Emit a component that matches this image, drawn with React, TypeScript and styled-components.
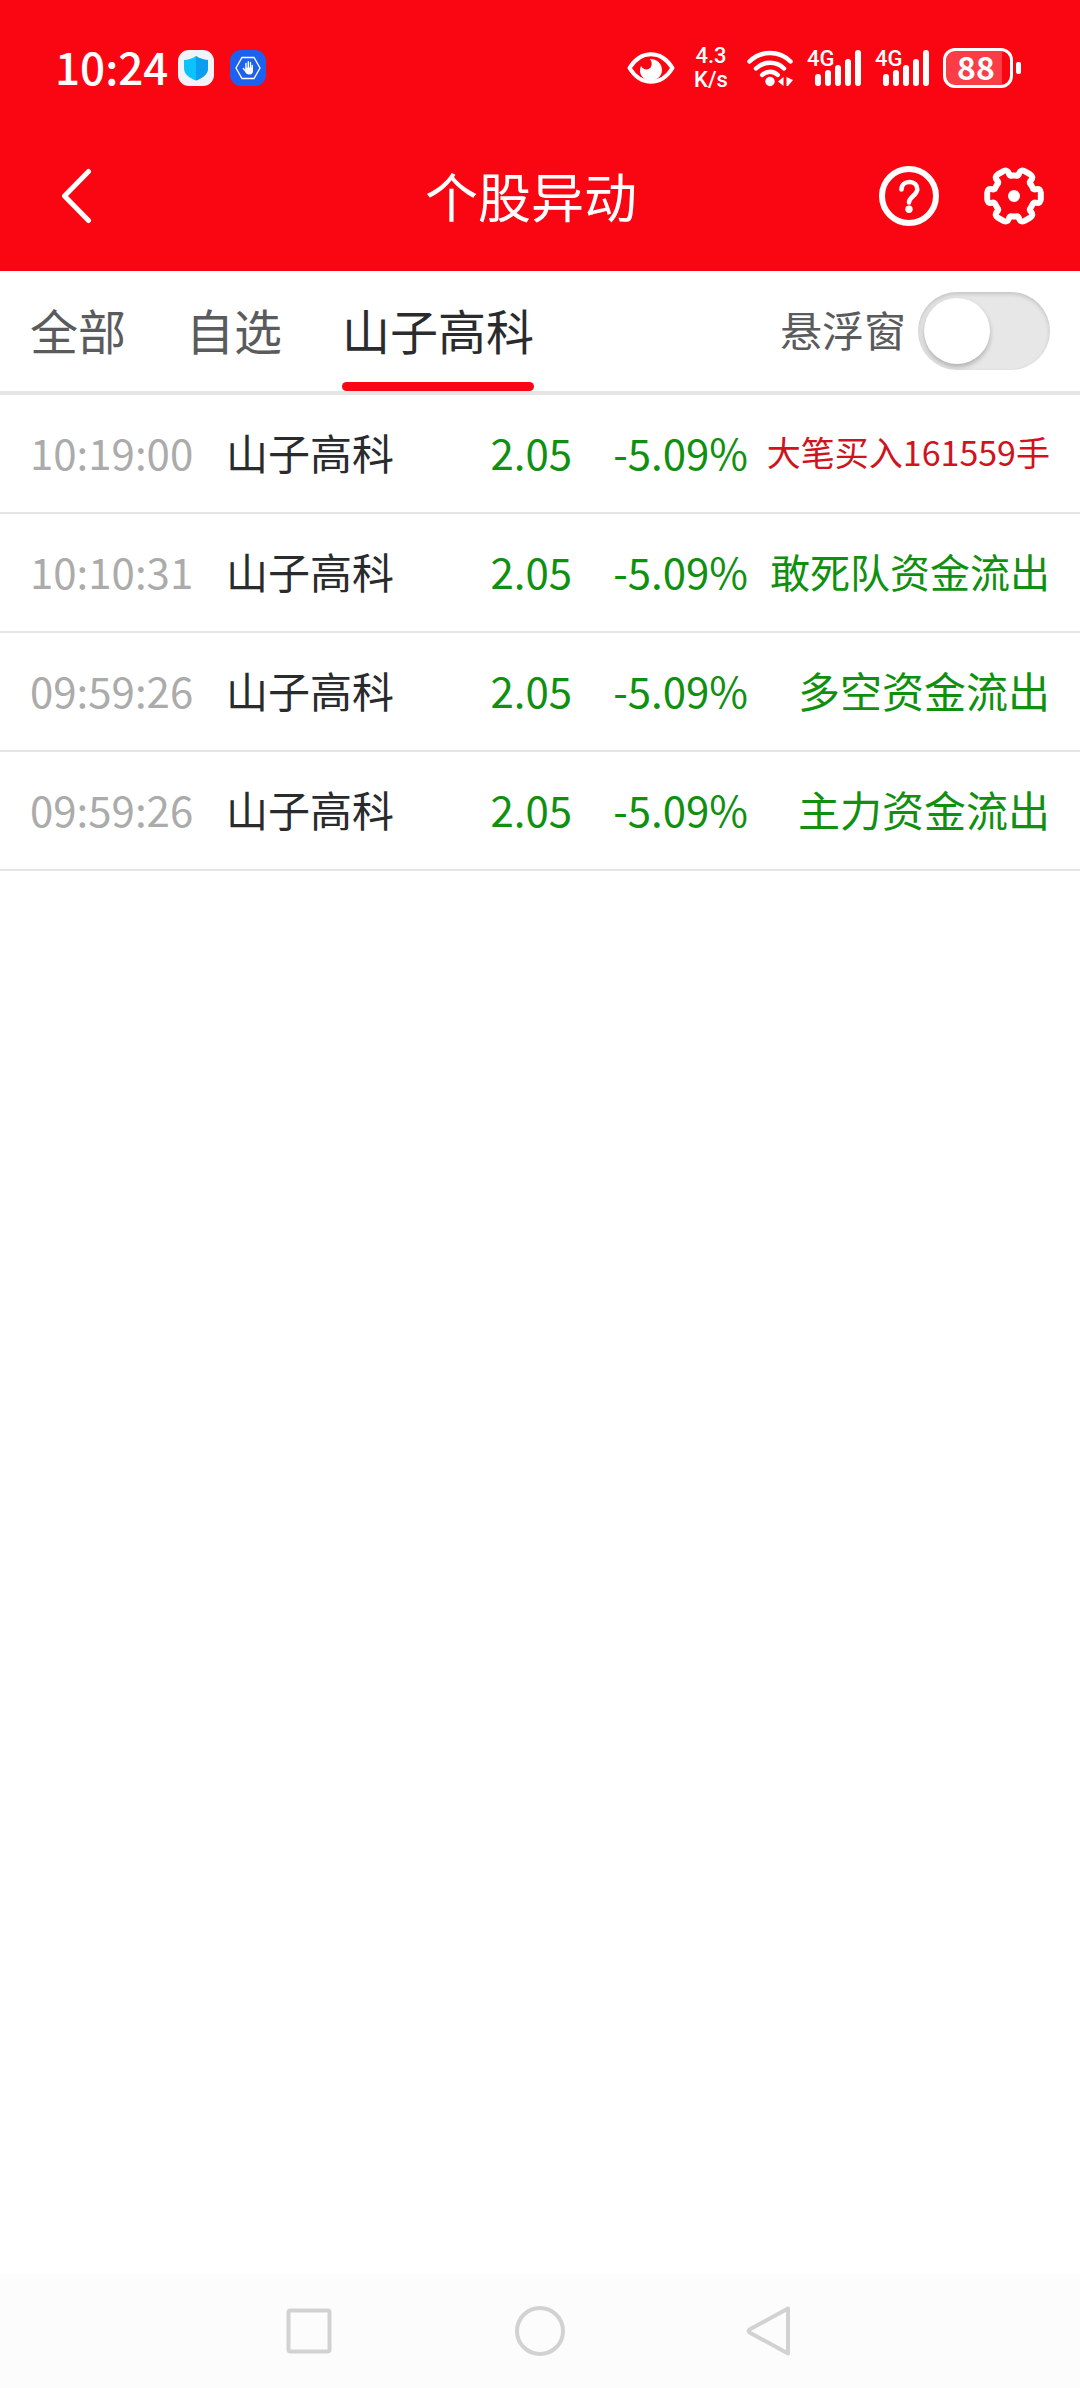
import React, { useState } from "react";
import styled, { createGlobalStyle } from "styled-components";

const color = {
  brand: "#f90612",
  ink: "#2a2b2d",
  tab: "#5a5b5c",
  muted: "#ababab",
  line: "#e5e5e6",
  up: "#d0131c",
  down: "#109010",
  nav: "#d2d2d2",
};

const GlobalStyle = createGlobalStyle`
  *, *::before, *::after { box-sizing: border-box; }
  body {
    margin: 0;
    background: #fff;
    color: ${color.ink};
    font-family: "Noto Sans CJK SC", "Noto Sans", sans-serif;
  }
  button {
    margin: 0;
    padding: 0;
    border: 0;
    background: none;
    color: inherit;
    font: inherit;
    cursor: pointer;
  }
  svg { display: block; }
`;

const Page = styled.div`
  min-height: 100vh;
  display: flex;
  flex-direction: column;
`;

const TopArea = styled.header`
  background: ${color.brand};
  color: #fff;
`;

const StatusBar = styled.div`
  display: flex;
  align-items: center;
  justify-content: space-between;
  height: 121px;
  padding: 15px 59px 0 55px;
`;

const StatusGroup = styled.div<{ $gap: number }>`
  display: flex;
  align-items: center;
  gap: ${(p) => p.$gap}px;
`;

const Clock = styled.time`
  width: 107px;
  padding-bottom: 4px;
  font-size: 44px;
  line-height: 48px;
  font-weight: 500;
`;

const Speed = styled.div`
  width: 36px;
  font-family: Roboto, "Noto Sans CJK SC", sans-serif;
  font-size: 22px;
  line-height: 24px;
  font-weight: 500;
  text-align: center;
  white-space: nowrap;
`;

const SignalBox = styled.div`
  display: grid;
  width: 54px;
  height: 36px;

  > * {
    grid-area: 1 / 1;
  }
`;

const SignalLabel = styled.span`
  font-family: Roboto, "Noto Sans CJK SC", sans-serif;
  font-size: 22px;
  line-height: 18px;
  font-weight: 500;
`;

const Battery = styled.div`
  display: flex;
  align-items: center;
  gap: 3px;
`;

const BatteryBody = styled.div`
  width: 70px;
  height: 40px;
  padding-right: 4px;
  border: 3px solid #fff;
  border-radius: 12px;
  background: linear-gradient(to right, rgba(255, 255, 255, 0.22) 88%, transparent 88%);
  font-size: 32px;
  line-height: 30px;
  font-weight: 700;
  text-align: center;
`;

const BatteryTip = styled.div`
  width: 5px;
  height: 12px;
  border-radius: 2px;
  background: #fff;
`;

const TitleBar = styled.div`
  display: grid;
  grid-template-columns: 201px 1fr 219px;
  align-items: center;
  height: 150px;
`;

const BackButton = styled.button`
  display: flex;
  align-items: center;
  height: 100%;
  padding-left: 60px;
`;

const Title = styled.h1`
  margin: 0;
  padding-bottom: 2px;
  font-size: 53px;
  line-height: 64px;
  font-weight: 400;
  text-align: center;
`;

const Actions = styled.div`
  display: flex;
  justify-content: flex-end;
  gap: 45px;
  padding-right: 36px;
`;

const TabBar = styled.div`
  display: flex;
  justify-content: space-between;
  height: 124px;
  padding: 0 30px;
  border-bottom: 4px solid ${color.line};
`;

const Tabs = styled.div`
  display: flex;
  gap: 60px;
`;

const Tab = styled.button<{ $active: boolean }>`
  position: relative;
  padding-bottom: 4px;
  color: ${(p) => (p.$active ? color.ink : color.tab)};
  font-size: 48px;
  line-height: 72px;

  &::after {
    content: "";
    position: absolute;
    left: 0;
    right: 0;
    bottom: 0;
    height: 9px;
    border-radius: 5px;
    background: ${(p) => (p.$active ? color.brand : "transparent")};
  }
`;

const FloatSwitch = styled.label`
  display: flex;
  align-items: center;
  gap: 12px;
  color: ${color.tab};
  font-size: 42px;
  line-height: 60px;
`;

const SwitchText = styled.span`
  padding-bottom: 4px;
`;

const Switch = styled.input`
  appearance: none;
  display: flex;
  width: 132px;
  height: 78px;
  margin: 0;
  padding: 6px;
  border-radius: 39px;
  background: #e7e7e7;
  box-shadow: inset 0 2px 4px rgba(0, 0, 0, 0.16);
  cursor: pointer;

  &::before {
    content: "";
    width: 66px;
    height: 66px;
    border-radius: 50%;
    background: #fff;
    box-shadow: 0 3px 5px rgba(0, 0, 0, 0.24);
  }

  &:checked {
    justify-content: flex-end;
    background: ${color.brand};
  }
`;

const EventTable = styled.table`
  width: 100%;
  table-layout: fixed;
  border-collapse: separate;
  border-spacing: 0;
`;

const Col = styled.col<{ $width?: number }>`
  width: ${(p) => (p.$width ? `${p.$width}px` : "auto")};
`;

const Cell = styled.td<{ $tone?: string; $align?: string; $size?: number }>`
  height: 119px;
  padding: 0 0 4px;
  border-bottom: 2px solid ${color.line};
  color: ${(p) => p.$tone ?? color.ink};
  font-size: ${(p) => p.$size ?? 42}px;
  line-height: 60px;
  text-align: ${(p) => p.$align ?? "left"};
  white-space: nowrap;

  &:first-child {
    padding-left: 30px;
  }

  &:last-child {
    padding-right: 30px;
  }
`;

const NavBar = styled.nav`
  display: flex;
  justify-content: center;
  height: 114px;
  margin-top: auto;
  background: #fcfcfc;
`;

const NavButton = styled.button`
  display: flex;
  align-items: center;
  justify-content: center;
  width: 231px;
`;

const ShieldIcon = () => (
  <svg width="36" height="36" viewBox="0 0 36 36" aria-hidden="true">
    <rect width="36" height="36" rx="11" fill="#f1f3f7" />
    <path d="M18 6c3.500 2.500 7.500 3.800 12 4v8c0 6-5 10-12 12.500C11 28 6 24 6 18v-8c4.500-.2 8.500-1.500 12-4z" fill="#0bc3fb" />
    <path d="M18 6c3.500 2.500 7.500 3.800 12 4v8c0 6-5 10-12 12.500z" fill="#0c9cf0" />
  </svg>
);

const HandIcon = () => (
  <svg width="36" height="36" viewBox="0 0 36 36" aria-hidden="true">
    <rect width="36" height="36" rx="11" fill="#1c62ef" />
    <path d="M12 7.500h12l6 10.500-6 10.500H12L6 18z" fill="none" stroke="#fff" strokeWidth="1.300" />
    <path
      d="M16 19v-5.500M18.300 18v-6.300M20.500 18v-5.500M22.300 20v-4.500M13.300 18.500l3 3.500"
      stroke="#fff"
      strokeWidth="1.400"
      strokeLinecap="round"
    />
    <path d="M15.300 17.500H23V21c0 2-1.300 3.500-3.300 3.500h-1c-1.300 0-2.200-.6-3-1.700z" fill="#fff" />
  </svg>
);

const EyeIcon = () => (
  <svg width="48" height="34" viewBox="0 0 48 34" aria-hidden="true">
    <path
      d="M2.500 17C8 8 15 3.200 24 3.200S40 8 45.500 17C40 26 33 30.800 24 30.800S8 26 2.500 17z"
      fill="none"
      stroke="#fff"
      strokeWidth="4"
      strokeLinejoin="round"
    />
    <path d="M23 8c7 0 12 4.500 12 11 0 6-5 10.500-11 10.500S13 25.500 13 19.500c0-1.700.3-3 1-4.500 1.500 2.500 3.500 3.800 6 3.500 4.500-.5 6.300-6 3-10.500z" fill="#fff" />
  </svg>
);

const WifiIcon = () => (
  <svg width="46" height="38" viewBox="0 0 46 38" aria-hidden="true">
    <g fill="none" stroke="#fff" strokeWidth="4.500" strokeLinecap="round">
      <path d="M2.500 12.500a29 29 0 0 1 41 0" />
      <path d="M9 19.500a20 20 0 0 1 28 0" />
      <path d="M15.200 26a11 11 0 0 1 15.600 0" />
    </g>
    <circle cx="23" cy="32.500" r="4.700" fill="#fff" />
    <path d="M31 32.500l5.500-4.500v9zM39.500 28l6.500 3-5 6h-1.500z" fill="#fff" />
  </svg>
);

const barTops = [24, 20, 15, 9, 0];

const Signal = () => (
  <SignalBox>
    <svg width="54" height="36" viewBox="0 0 54 36" aria-hidden="true">
      {barTops.map((top, i) => (
        <rect key={top} x={8 + i * 10} y={top} width="6" height={36 - top} rx="3" fill="#fff" />
      ))}
    </svg>
    <SignalLabel>4G</SignalLabel>
  </SignalBox>
);

const BackIcon = () => (
  <svg width="32" height="56" viewBox="0 0 32 56" aria-hidden="true">
    <path d="M28.500 3.500L4.500 28l24 24.500" fill="none" stroke="#fff" strokeWidth="5" strokeLinecap="round" strokeLinejoin="round" />
  </svg>
);

const HelpIcon = () => (
  <svg width="60" height="60" viewBox="-30 -30 60 60" aria-hidden="true">
    <circle r="27" fill="none" stroke="#fff" strokeWidth="6" />
    <path
      d="M-7.500 -6.500C-7.500 -11 -4 -14 .5 -14C5 -14 8.300 -11 8.300 -6.800C8.300 -1 0 1 0 6.500"
      fill="none"
      stroke="#fff"
      strokeWidth="4.600"
      strokeLinecap="round"
    />
    <circle cy="13.300" r="3.700" fill="#fff" />
  </svg>
);

/* Six-toothed gear: each tooth has two rounded corners, each valley a flat floor. */
const polar = (deg: number, r: number) => {
  const t = (deg * Math.PI) / 180;
  return `${(r * Math.cos(t)).toFixed(2)} ${(r * Math.sin(t)).toFixed(2)}`;
};

const gearPath =
  [0, 60, 120, 180, 240, 300]
    .map((a, i) =>
      [
        `${i ? "L" : "M"}${polar(a - 7, 27)}`,
        `L${polar(a + 7, 27)}`,
        `Q${polar(a + 16, 27.5)} ${polar(a + 17, 23.5)}`,
        `Q${polar(a + 17, 20)} ${polar(a + 24, 20.5)}`,
        `L${polar(a + 36, 20.5)}`,
        `Q${polar(a + 43, 20)} ${polar(a + 43, 23.5)}`,
        `Q${polar(a + 44, 27.5)} ${polar(a + 53, 27)}`,
      ].join("")
    )
    .join("") + "Z";

const GearIcon = () => (
  <svg width="60" height="60" viewBox="-30 -30 60 60" aria-hidden="true">
    <path d={gearPath} fill="none" stroke="#fff" strokeWidth="6" strokeLinejoin="round" />
    <circle r="6" fill="#fff" />
  </svg>
);

const navStroke = { fill: "none", stroke: color.nav, strokeWidth: 4, strokeLinejoin: "round" as const };

const tabs = ["全部", "自选", "山子高科"];

const events = [
  { time: "10:19:00", text: "大笔买入161559手", tone: color.up, size: 34 },
  { time: "10:10:31", text: "敢死队资金流出", tone: color.down, size: 40 },
  { time: "09:59:26", text: "多空资金流出", tone: color.down, size: 42 },
  { time: "09:59:26", text: "主力资金流出", tone: color.down, size: 42 },
];

export default function App() {
  const [active, setActive] = useState(2);
  const [floating, setFloating] = useState(false);

  return (
    <Page>
      <GlobalStyle />
      <TopArea>
        <StatusBar>
          <StatusGroup $gap={16}>
            <Clock>10:24</Clock>
            <ShieldIcon />
            <HandIcon />
          </StatusGroup>
          <StatusGroup $gap={14}>
            <StatusGroup $gap={18}>
              <EyeIcon />
              <Speed>
                4.3
                <br />
                K/s
              </Speed>
              <WifiIcon />
            </StatusGroup>
            <Signal />
            <Signal />
            <Battery>
              <BatteryBody>88</BatteryBody>
              <BatteryTip />
            </Battery>
          </StatusGroup>
        </StatusBar>
        <TitleBar>
          <BackButton aria-label="返回">
            <BackIcon />
          </BackButton>
          <Title>个股异动</Title>
          <Actions>
            <button aria-label="帮助">
              <HelpIcon />
            </button>
            <button aria-label="设置">
              <GearIcon />
            </button>
          </Actions>
        </TitleBar>
      </TopArea>

      <TabBar>
        <Tabs role="tablist">
          {tabs.map((name, i) => (
            <Tab key={name} role="tab" aria-selected={i === active} $active={i === active} onClick={() => setActive(i)}>
              {name}
            </Tab>
          ))}
        </Tabs>
        <FloatSwitch htmlFor="float-window">
          <SwitchText>悬浮窗</SwitchText>
          <Switch
            id="float-window"
            type="checkbox"
            role="switch"
            checked={floating}
            onChange={(e) => setFloating(e.target.checked)}
          />
        </FloatSwitch>
      </TabBar>

      <EventTable>
        <colgroup>
          <Col $width={226} />
          <Col />
          <Col $width={112} />
          <Col $width={176} />
          <Col $width={332} />
        </colgroup>
        <tbody>
          {events.map((e) => (
            <tr key={e.text}>
              <Cell $tone={color.muted}>{e.time}</Cell>
              <Cell>山子高科</Cell>
              <Cell $tone={color.down} $align="right">2.05</Cell>
              <Cell $tone={color.down} $align="right">-5.09%</Cell>
              <Cell $tone={e.tone} $align="right" $size={e.size}>{e.text}</Cell>
            </tr>
          ))}
        </tbody>
      </EventTable>

      <NavBar>
        <NavButton aria-label="最近任务">
          <svg width="50" height="50" viewBox="0 0 50 50" aria-hidden="true">
            <rect x="4.500" y="4.500" width="41" height="41" rx="2" {...navStroke} />
          </svg>
        </NavButton>
        <NavButton aria-label="主屏幕">
          <svg width="50" height="50" viewBox="0 0 50 50" aria-hidden="true">
            <circle cx="25" cy="25" r="23" {...navStroke} />
          </svg>
        </NavButton>
        <NavButton aria-label="返回上一页">
          <svg width="50" height="50" viewBox="0 0 50 50" aria-hidden="true">
            <path d="M42 2.500v45L3.500 26.500q-2-1.500 0-3z" {...navStroke} />
          </svg>
        </NavButton>
      </NavBar>
    </Page>
  );
}
